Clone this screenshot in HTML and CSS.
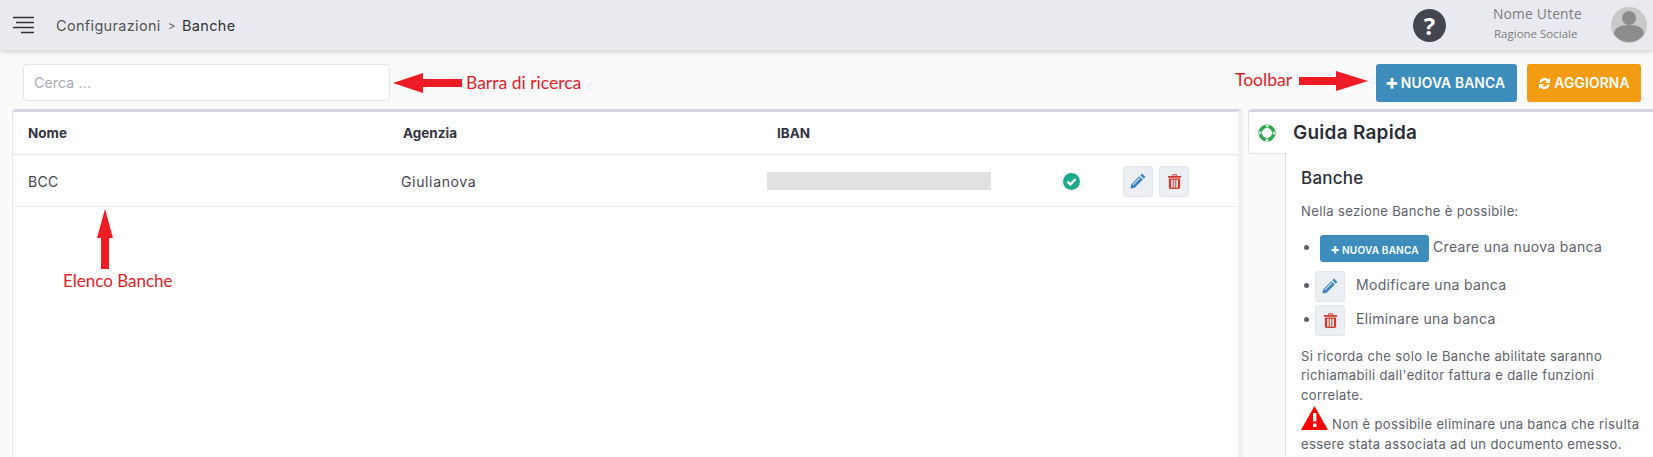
FILE: index.html
```html
<!DOCTYPE html>
<html lang="it">
<head>
<meta charset="utf-8">
<title>Banche</title>
<link rel="stylesheet" href="styles.css">
</head>
<body>
<svg class="sprites" width="0" height="0" aria-hidden="true">
  <symbol id="pencil" viewBox="0 0 16 16"><path d="M12 .6 15.400 4 13.700 5.700 10.300 2.300ZM9.400 3.200 12.800 6.600 4.700 14.700 .4 15.600 1.300 11.300ZM2.500 11.500 3.300 12.100 10.200 5.200 9.600 4.600Z" fill-rule="evenodd"/></symbol>
  <symbol id="trash" viewBox="0 0 16 16"><path d="M5.300 2 6 .3h4l.7 1.700H15v2H1V2ZM6.600 1.400 6.300 2h3.400l-.3-.6ZM2 4.800h12v9.400c0 1-.8 1.800-1.800 1.800H3.800c-1 0-1.800-.8-1.800-1.800ZM4.400 6v8.600h1.700V6ZM7.200 6v8.600h1.600V6ZM9.900 6v8.600h1.700V6Z" fill-rule="evenodd"/></symbol>
</svg>
<header class="topbar">
  <svg class="burger" width="22" height="18" viewBox="0 0 22 18"><path d="M0 1.500h21M3 6.500h18M0 11.500h21M8 16.500h13" stroke="#333" stroke-width="1.300" fill="none"/></svg>
  <nav class="crumbs"><span class="crumb-muted">Configurazioni</span><span class="crumb-sep">&gt;</span><span class="crumb-now">Banche</span></nav>
  <span class="help-round">?</span>
  <div class="user"><div class="user-name">Nome Utente</div><div class="user-company">Ragione Sociale</div></div>
  <div class="avatar"><svg width="36" height="36" viewBox="0 0 36 36"><circle cx="18" cy="18" r="18" fill="#c9c9c9"/><circle cx="18" cy="11" r="7" fill="#8c8c8c"/><path d="M3 27c0-6 6-9 15-9s15 3 15 9c-3 5-9 8-15 8S6 32 3 27Z" fill="#8c8c8c"/></svg></div>
</header>
<section class="toolbar">
  <input class="search" type="text" placeholder="Cerca ...">
  <div class="actions">
    <button class="btn btn-blue"><span class="plus">+</span>NUOVA BANCA</button>
    <button class="btn btn-orange"><svg width="13" height="13" viewBox="0 0 16 16"><path d="M1.500 6.800A6.700 6.700 0 0 1 12.800 3L14.800 1V7.300H8.500l2.300-2.300A3.900 3.900 0 0 0 4.500 6.800ZM14.500 9.200A6.700 6.700 0 0 1 3.200 13L1.200 15V8.700H7.500l-2.300 2.300A3.900 3.900 0 0 0 11.500 9.200Z" fill="#fff"/></svg>AGGIORNA</button>
  </div>
</section>
<main class="content">
  <section class="card">
    <div class="row head"><div class="c-name">Nome</div><div class="c-ag">Agenzia</div><div class="c-iban">IBAN</div></div>
    <div class="row item">
      <div class="c-name">BCC</div>
      <div class="c-ag ag-val">Giulianova</div>
      <div class="c-bar"><div class="masked"></div></div>
      <div class="c-check"><svg width="17" height="17" viewBox="0 0 17 17"><circle cx="8.500" cy="8.500" r="8.500" fill="#1fa98c"/><path d="M4.500 8.700 7.300 11.500 12.600 6" stroke="#fff" stroke-width="2.400" fill="none"/></svg></div>
      <div class="c-acts">
        <span class="ico-btn"><svg class="i-blue" width="16" height="16"><use href="#pencil"/></svg></span>
        <span class="ico-btn"><svg class="i-red" width="15" height="17"><use href="#trash"/></svg></span>
      </div>
    </div>
  </section>
  <aside class="side">
    <div class="side-tab">
      <svg width="18" height="18" viewBox="0 0 18 18"><circle cx="9" cy="9" r="6.800" fill="none" stroke="#2fa84f" stroke-width="3.600"/><circle cx="9" cy="9" r="6.800" fill="none" stroke="#d5ecdb" stroke-width="2.200" stroke-dasharray="3 7.680" stroke-dashoffset="1.500"/></svg>
      <span class="side-title">Guida Rapida</span>
    </div>
    <div class="side-body">
      <h3>Banche</h3>
      <p class="intro">Nella sezione Banche è possibile:</p>
      <ul>
        <li class="li-new"><span class="mini-btn"><span class="plus-s">+</span>NUOVA BANCA</span>Creare una nuova banca</li>
        <li class="li-ico"><span class="ico-btn"><svg class="i-blue" width="16" height="16"><use href="#pencil"/></svg></span>Modificare una banca</li>
        <li class="li-ico"><span class="ico-btn"><svg class="i-red" width="15" height="17"><use href="#trash"/></svg></span>Eliminare una banca</li>
      </ul>
      <p class="note">Si ricorda che solo le Banche abilitate saranno richiamabili dall'editor fattura e dalle funzioni correlate.</p>
      <p class="warn"><svg width="27" height="24" viewBox="0 0 27 24"><path d="M13.500 0 27 24H0Z" fill="#f00"/><path d="M12 7h3.400v8.500H12ZM12 17.500h3.400V21H12Z" fill="#fff"/></svg> Non è possibile eliminare una banca che risulta essere stata associata ad un documento emesso.</p>
    </div>
  </aside>
</main>
<div class="note-red n-search">Barra di ricerca</div>
<div class="note-red n-toolbar">Toolbar</div>
<div class="note-red n-list">Elenco Banche</div>
<svg class="arrow a-search" width="70" height="20" viewBox="0 0 70 20"><path d="M0 10 30 0V6H69V14H30V20Z" fill="#ed1c24"/></svg>
<svg class="arrow a-toolbar" width="70" height="20" viewBox="0 0 70 20"><path d="M69 10 37 0V6H0V14H37V20Z" fill="#ed1c24"/></svg>
<svg class="arrow a-list" width="16" height="60" viewBox="0 0 16 60"><path d="M8 0 16 29H12V60H4V29H0Z" fill="#ed1c24"/></svg>
</body>
</html>
```
FILE: styles.css
```css
* { box-sizing: border-box; }
html, body { margin: 0; height: 457px; overflow: hidden; }
body { position: relative; background: #fafafa; font-family: "Inter", "Liberation Sans", sans-serif; color: #595d6e; font-size: 13px; }
.sprites { position: absolute; }

.topbar { height: 50px; background: #e9eaef; box-shadow: 0 1px 6px rgba(0,0,0,.22); display: flex; align-items: center; padding: 0 0 0 13px; position: relative; }
.burger { margin-right: 21px; }
.crumbs { font-size: 14.500px; display: flex; align-items: center; letter-spacing: .33px; flex: 1; }
.crumb-muted { color: #555; }
.crumb-sep { margin: 0 6px 0 7px; color: #666; font-size: 12px; }
.crumb-now { color: #333; }
.help-round { width: 33px; height: 33px; border-radius: 50%; background: #44464f; color: #fff; font: 700 24px/33px "Open Sans", sans-serif; text-align: center; }
.user { width: 122px; margin-left: 33px; padding-left: 14px; font-family: "Open Sans", sans-serif; color: #7d7d7d; }
.user-name { font-size: 13.800px; font-weight: 500; letter-spacing: .2px; line-height: 18px; margin-top: -2px; }
.user-company { font-size: 11.500px; font-weight: 500; line-height: 18px; margin-top: 2px; padding-left: 1px; }
.avatar { width: 36px; height: 36px; margin: 0 6px 0 10px; }

.toolbar { display: flex; justify-content: space-between; padding: 14px 12px 0 23px; height: 59px; }
.search { width: 367px; height: 37px; border: 1px solid #e2e5ec; border-radius: 4px; background: #fff; padding: 0 10px; font: 14px "Inter", sans-serif; letter-spacing: .2px; }
.search::placeholder { color: #a8abb5; }
.actions { display: flex; gap: 10px; height: 38px; }
.btn { border: 0; border-radius: 3px; color: #fff; font: 600 13.800px "Inter", sans-serif; letter-spacing: .15px; display: flex; align-items: center; justify-content: center; gap: 3px; padding: 0; }
.btn-blue { background: #3c8dbc; width: 141px; padding-right: 3px; gap: 2px; }
.btn-orange { background: #f39c12; width: 114px; }
.plus { font-size: 20px; font-weight: 800; line-height: 14px; margin-top: -2px; }

.content { display: flex; gap: 5px; padding-left: 12px; height: 348px; }
.card { width: 1231px; height: 348px; background: #fff; border-top: 3px solid #d3d7e0; border-left: 1px solid #e4e5e8; border-right: 5px solid #f1f1f2; border-top-left-radius: 4px; border-top-right-radius: 4px; position: relative; }
.row { display: flex; align-items: center; }
.head { height: 44px; font-weight: 700; color: #33343f; font-size: 13.500px; border-bottom: 3px solid #f3f3f3; }
.item { height: 51px; border-bottom: 1px solid #f0f0f0; color: #44454f; font-size: 14px; letter-spacing: .3px; }
.c-name { width: 390px; padding-left: 15px; }
.c-ag { width: 374px; }
.ag-val { width: 364px; margin-left: -2px; letter-spacing: .65px; }
.c-bar { width: 224px; margin-left: 2px; }
.masked { height: 18px; background: #e2e1df; }
.c-check { width: 132px; padding-left: 72px; display: flex; }
.c-acts { display: flex; gap: 6px; }
.ico-btn { display: inline-flex; width: 30px; height: 31px; align-items: center; justify-content: center; background: #ebeef2; border: 1px solid #e2e6ea; border-radius: 3px; }
.i-blue { fill: #3f85c6; }
.i-red { fill: #cf3a2b; }

.side { flex: 1; position: relative; }
.side-tab { height: 45px; background: #fff; width: 405px; border-top: 3px solid #d3d7e0; border-left: 1px solid #e4e5e8; border-bottom: 1px solid #e4e5e8; border-top-left-radius: 4px; border-bottom-left-radius: 4px; display: flex; align-items: center; padding-left: 9px; gap: 17px; }
.side-title { font-size: 19px; font-weight: 600; color: #2c2e38; letter-spacing: .25px; }
.side-body { margin-left: 37px; height: 303px; margin-top: -1px; background: #fff; border-left: 1px solid #dcdfe4; padding: 15px 0 0 15px; width: 368px; position: relative; }
.side-body h3 { margin: 0 0 14px; font-size: 17px; font-weight: 500; color: #2e2f38; letter-spacing: .25px; line-height: 20px; }
.side-body p { margin: 0; line-height: 19.500px; letter-spacing: .38px; color: #60626c; }
.intro { margin-bottom: 13px !important; }
.side-body ul { margin: 0 0 8px; padding: 0 0 0 19px; color: #60626c; font-size: 14px; letter-spacing: .33px; }
.li-new { height: 36px; }
.li-ico { height: 34px; }
.li-ico .ico-btn { vertical-align: middle; margin: 0 11px 0 -5px; }
.mini-btn { display: inline-block; vertical-align: middle; height: 27px; width: 109px; background: #3c8dbc; color: #fff; border-radius: 3px; font-size: 10px; font-weight: 600; line-height: 27px; text-align: center; margin: 0 4px 0 0; letter-spacing: .2px; }
.plus-s { font-size: 14px; font-weight: 800; margin-right: 2px; }
.warn svg { vertical-align: -1px; }
.warn { margin-top: 1px !important; }

.note-red { position: absolute; color: #e6202a; font-family: "Lato", sans-serif; font-size: 17.500px; line-height: 20px; }
.n-search { left: 466px; top: 73px; }
.n-toolbar { left: 1235px; top: 70px; }
.n-list { left: 63px; top: 271px; font-size: 17px; }
.arrow { position: absolute; }
.a-search { left: 393px; top: 73px; }
.a-toolbar { left: 1299px; top: 71px; }
.a-list { left: 97px; top: 209px; }
```
